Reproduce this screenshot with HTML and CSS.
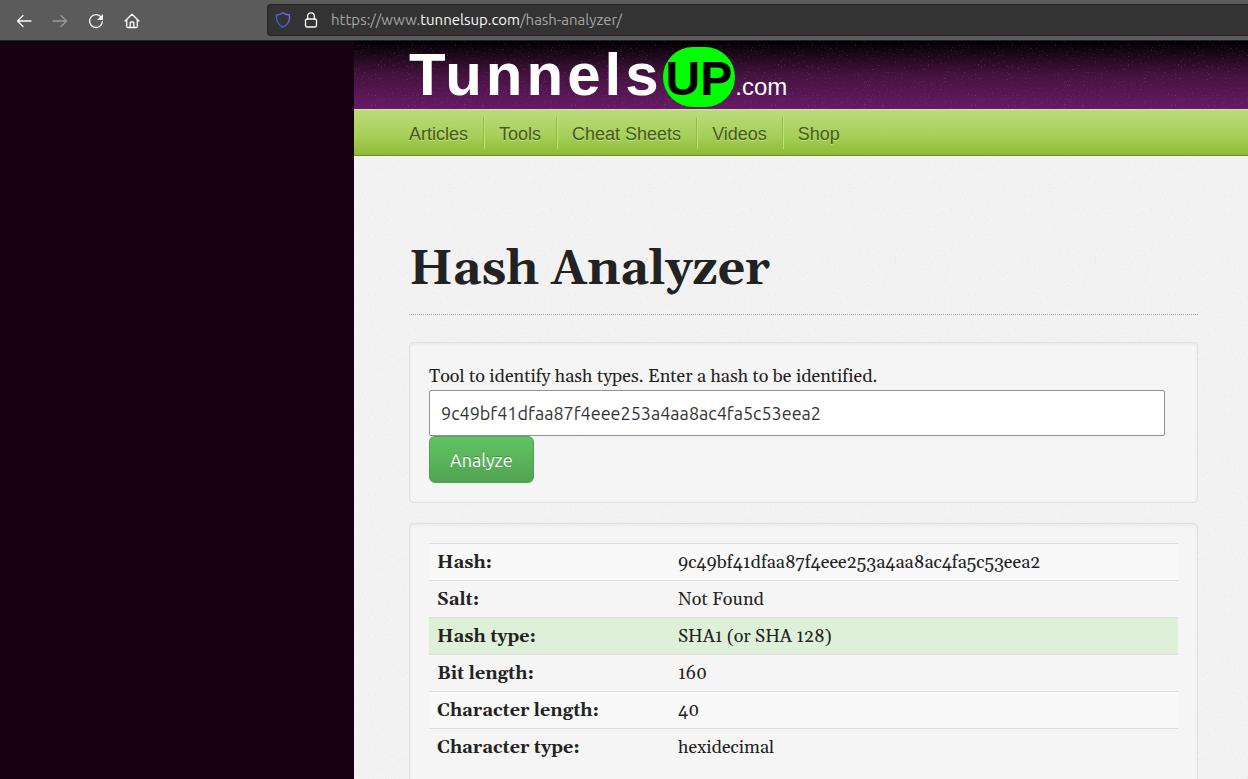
FILE: index.html
```html
<!DOCTYPE html>
<html lang="en">
<head>
<meta charset="utf-8">
<meta name="viewport" content="width=device-width, initial-scale=1">
<title>Hash Analyzer</title>
<link rel="stylesheet" href="styles.css">
</head>
<body>
<div class="toolbar">
  <div class="toolbar-buttons">
    <button class="tool" type="button" aria-label="Back"><svg viewBox="0 0 16 16"><path d="M15 8H1.5M7 2.5 1.5 8 7 13.500"/></svg></button>
    <button class="tool tool-dim" type="button" aria-label="Forward"><svg viewBox="0 0 16 16"><path d="M1 8h13.500M9 2.500 14.500 8 9 13.500"/></svg></button>
    <button class="tool" type="button" aria-label="Reload"><svg viewBox="0 0 16 16"><path d="M13.200 4.300A6.400 6.400 0 1 0 14.400 8.500"/><path class="solid" d="M15 1v6H9z"/></svg></button>
    <button class="tool" type="button" aria-label="Home"><svg viewBox="0 0 16 16"><path d="M1 8 8 1.300 15 8M2.700 6.800v6.400q0 1.300 1.300 1.300h8q1.300 0 1.300-1.300V6.800M6.200 14.500V10q0-1 1-1h1.600q1 0 1 1v4.500"/></svg></button>
  </div>
  <div class="address">
    <svg class="address-icon" viewBox="0 0 16 16"><defs><linearGradient id="shield" x1="0" y1="1" x2="1" y2="0"><stop offset="0.300" stop-color="#3463dd"/><stop offset="1" stop-color="#9b6be8"/></linearGradient></defs><path d="M8 .8c2 1.500 4.200 2.200 6.500 2.200.5 5-1.500 9.800-6.500 12.200C3 12.800 1 8 1.500 3 3.800 3 6 2.300 8 .8z" stroke="url(#shield)"/></svg>
    <svg class="address-icon" viewBox="0 0 16 16"><rect x="2.500" y="7" width="11" height="8" rx="1.500"/><path d="M4.700 7V4.200a3.300 3.300 0 0 1 6.600 0V7"/></svg>
    <span class="url">https://www.<span class="host">tunnelsup.com</span>/hash-analyzer/</span>
  </div>
</div>
<div class="layout">
  <div class="gutter"></div>
  <div class="page">
    <header class="banner">
      <a class="logo" href="#"><span class="logo-name">Tunnels</span><span class="logo-up">UP</span><span class="logo-com">.com</span></a>
    </header>
    <nav class="menu">
      <a href="#">Articles</a><a href="#">Tools</a><a href="#">Cheat Sheets</a><a href="#">Videos</a><a href="#">Shop</a>
    </nav>
    <main class="content">
      <h1 class="title">Hash Analyzer</h1>
      <form class="well">
        <label class="prompt" for="hash">Tool to identify hash types. Enter a hash to be identified.</label>
        <input class="hash-input" id="hash" type="text" value="9c49bf41dfaa87f4eee253a4aa8ac4fa5c53eea2">
        <button class="analyze" type="button">Analyze</button>
      </form>
      <section class="well">
        <table class="results">
          <tbody>
            <tr class="striped"><th scope="row">Hash:</th><td>9c49bf41dfaa87f4eee253a4aa8ac4fa5c53eea2</td></tr>
            <tr><th scope="row">Salt:</th><td>Not Found</td></tr>
            <tr class="success"><th scope="row">Hash type:</th><td>SHA1 (or SHA 128)</td></tr>
            <tr><th scope="row">Bit length:</th><td>160</td></tr>
            <tr class="striped"><th scope="row">Character length:</th><td>40</td></tr>
            <tr><th scope="row">Character type:</th><td>hexidecimal</td></tr>
          </tbody>
        </table>
      </section>
    </main>
  </div>
</div>
</body>
</html>
```

FILE: styles.css
```css
:root {
  --speckle: url("data:image/svg+xml,%3Csvg xmlns='http://www.w3.org/2000/svg' width='200' height='200'%3E%3Cfilter id='n' x='0' y='0' width='1' height='1'%3E%3CfeTurbulence type='fractalNoise' baseFrequency='.7' numOctaves='2' seed='4' stitchTiles='stitch'/%3E%3CfeColorMatrix values='0 0 0 0 .5 0 0 0 0 .5 0 0 0 0 .5 1 0 0 0 -.64'/%3E%3C/filter%3E%3Crect width='200' height='200' filter='url(%23n)'/%3E%3C/svg%3E");
}

* { box-sizing: border-box; }

html, body { height: 100%; }

body {
  margin: 0;
  display: flex;
  flex-direction: column;
  overflow: hidden;
  background: #170014;
  color: #222;
  font-family: Georgia, Gelasio, "Liberation Serif", serif;
  font-size: 18px;
  line-height: 28px;
  font-variant-ligatures: none;
}

/* Browser toolbar */
.toolbar {
  display: flex;
  flex: none;
  height: 41px;
  padding-top: 4px;
  background: #5b5b5b;
  border-bottom: 1px solid #222;
}

.toolbar-buttons {
  display: flex;
  flex: none;
  align-items: center;
  gap: 20px;
  width: 267px;
  height: 33px;
  padding-left: 16px;
}

.tool {
  width: 16px;
  height: 16px;
  padding: 0;
  border: 0;
  background: none;
  color: #fbfbfb;
}

.tool-dim { color: #999; }

.tool svg, .address-icon {
  display: block;
  width: 16px;
  height: 16px;
  fill: none;
  stroke: currentColor;
  stroke-width: 1.3;
  stroke-linecap: round;
  stroke-linejoin: round;
}

.tool .solid { fill: currentColor; stroke: none; }

.address {
  display: flex;
  flex: 1;
  align-items: center;
  height: 32px;
  padding-left: 7px;
  gap: 12px;
  background: #333;
  border: 1px solid #222;
  border-right: 0;
  border-radius: 4px 0 0 4px;
  color: #fbfbfb;
}

.url {
  color: #a6a6a6;
  font: 15px/20px Ubuntu, "Noto Sans", sans-serif;
}

.host { color: #fbfbfb; }

/* Site */
.layout {
  display: flex;
  flex: 1;
  min-height: 0;
}

.gutter { flex: none; width: 354px; }

.page {
  flex: 1;
  min-width: 0;
  overflow: hidden;
  background: var(--speckle) #f2f2f2;
}

.banner {
  height: 68px;
  padding: 4px 55px 0;
  background: var(--speckle), linear-gradient(#000, #45123f 50%, #681a68);
}

.logo {
  display: flex;
  align-items: baseline;
  color: #fff;
  font-family: "Liberation Sans", Arial, sans-serif;
  line-height: 60px;
  text-decoration: none;
}

.logo-name {
  font-size: 60px;
  font-weight: bold;
  letter-spacing: 4px;
}

.logo-up {
  padding: 5px 3px 1px;
  border-radius: 30px;
  background: #0f0;
  color: #000;
  font-size: 48px;
  font-weight: bold;
  line-height: 54px;
}

.logo-com { font-size: 24px; }

.menu {
  display: flex;
  align-items: center;
  height: 47px;
  padding: 0 40px;
  border-top: 1px solid #cfe39d;
  border-bottom: 1px solid #67902a;
  background: var(--speckle), linear-gradient(#bbdb7c, #a8d05b 55%, #8ebb33);
}

.menu a {
  padding: 2px 15px 0;
  color: #455a1a;
  font: 18px/30px "Liberation Sans", Arial, sans-serif;
  text-decoration: none;
  text-shadow: 0 1px 0 #c5e18d;
}

.menu a + a {
  border-left: 1px solid #8fbe3c;
  box-shadow: inset 1px 0 #c1e07f;
}

.content { padding: 82px 50px 0 55px; }

.title {
  margin: 0 0 28px;
  padding-bottom: 12px;
  border-bottom: 1px dotted #aaa;
  font-size: 48px;
  line-height: 64px;
}

.well {
  display: flex;
  flex-direction: column;
  align-items: flex-start;
  margin-bottom: 20px;
  padding: 19px;
  border: 1px solid #e0e0e0;
  border-radius: 4px;
  background: #f5f5f5;
  box-shadow: inset 0 1px 3px rgba(0, 0, 0, 0.06);
}

.title + .well { margin-top: -1px; }

.prompt {
  padding-top: 2px;
  line-height: 26px;
}

.hash-input {
  width: calc(100% - 13px);
  height: 46px;
  padding: 0 11px;
  border: 1px solid #8f8f9d;
  border-radius: 2px;
  background: #fff;
  color: #333;
  font: 18px/26px Ubuntu, "Noto Sans", sans-serif;
}

.analyze {
  height: 47px;
  padding: 0 20px;
  border: 1px solid #51a351;
  border-radius: 6px;
  background: linear-gradient(#62c462, #51a351);
  color: #fff;
  font: 18px/24px Ubuntu, "Noto Sans", sans-serif;
  text-shadow: 0 -1px 0 rgba(0, 0, 0, 0.25);
}

.results {
  width: 100%;
  border-collapse: separate;
  border-spacing: 0;
  table-layout: fixed;
}

.results th, .results td {
  height: 37px;
  padding: 2px 8px 0;
  border-top: 1px solid #ddd;
  text-align: left;
}

.results th { width: 241px; }

.striped { background: #f9f9f9; }

.success { background: #dff0d8; }
```
